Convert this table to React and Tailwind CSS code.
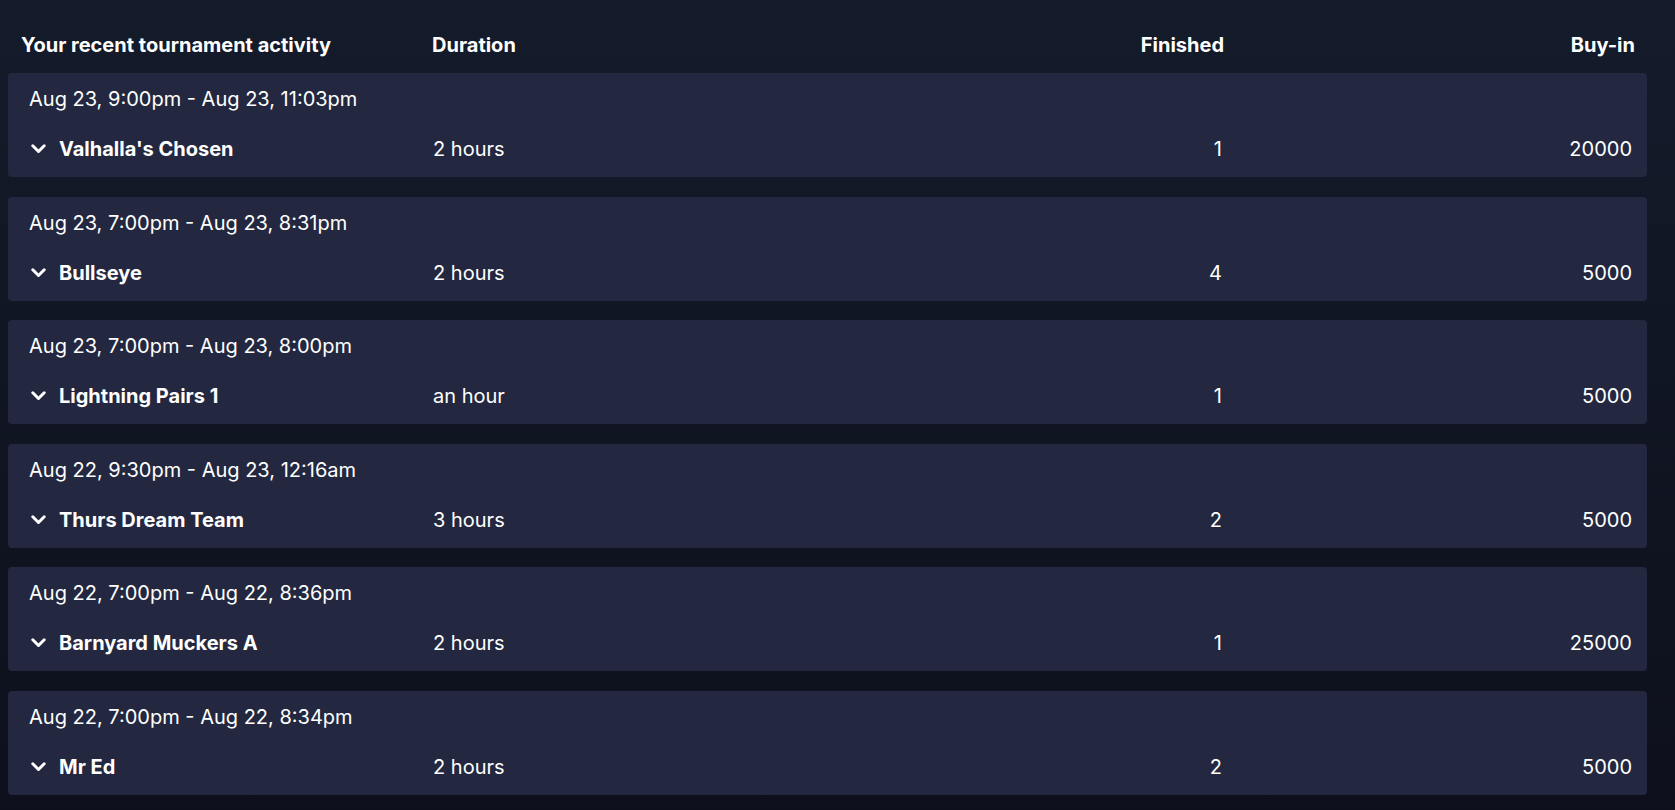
import React from "react";

const rows = [
  { date: "Aug 23, 9:00pm - Aug 23, 11:03pm", name: "Valhalla's Chosen", dur: "2 hours", fin: "1", buy: "20000" },
  { date: "Aug 23, 7:00pm - Aug 23, 8:31pm", name: "Bullseye", dur: "2 hours", fin: "4", buy: "5000" },
  { date: "Aug 23, 7:00pm - Aug 23, 8:00pm", name: "Lightning Pairs 1", dur: "an hour", fin: "1", buy: "5000" },
  { date: "Aug 22, 9:30pm - Aug 23, 12:16am", name: "Thurs Dream Team", dur: "3 hours", fin: "2", buy: "5000" },
  { date: "Aug 22, 7:00pm - Aug 22, 8:36pm", name: "Barnyard Muckers A", dur: "2 hours", fin: "1", buy: "25000" },
  { date: "Aug 22, 7:00pm - Aug 22, 8:34pm", name: "Mr Ed", dur: "2 hours", fin: "2", buy: "5000" },
];

function Chevron() {
  return (
    <svg width="15" height="10" viewBox="0 0 15 10" fill="none" className="shrink-0">
      <path d="M1.8 1.8 L7.5 7.5 L13.2 1.8" stroke="white" strokeWidth="3" strokeLinecap="round" strokeLinejoin="round" />
    </svg>
  );
}

export default function App() {
  return (
    <div
      className="h-[810px] overflow-hidden w-full bg-gradient-to-b from-[#141b2a] to-[#0d101c] text-white"
      style={{ fontFamily: "Inter, 'Noto Sans', sans-serif" }}
    >
      <div className="w-[1639px] ml-[8px] pt-[31px]">
        <div className="grid grid-cols-[411px_1fr_200px_411px] pl-[13px] pr-[12px] text-[20px] leading-[28px] font-bold">
          <div>Your recent tournament activity</div>
          <div>Duration</div>
          <div className="text-right">Finished</div>
          <div className="text-right">Buy-in</div>
        </div>
        <div className="mt-[14px] flex flex-col gap-[19.5px]">
          {rows.map((r, i) => (
            <div key={i} className="h-[104px] rounded-[4px] bg-[#232840] pl-[21px] pr-[15px] pt-[12px] text-[20px] leading-[28px]">
              <div>{r.date}</div>
              <div className="mt-[22px] grid grid-cols-[404px_1fr_200px_410px] items-center">
                <div className="flex items-center gap-[13px] pl-[2px] font-bold">
                  <Chevron />
                  <span>{r.name}</span>
                </div>
                <div>{r.dur}</div>
                <div className="text-right">{r.fin}</div>
                <div className="text-right">{r.buy}</div>
              </div>
            </div>
          ))}
        </div>
      </div>
    </div>
  );
}
